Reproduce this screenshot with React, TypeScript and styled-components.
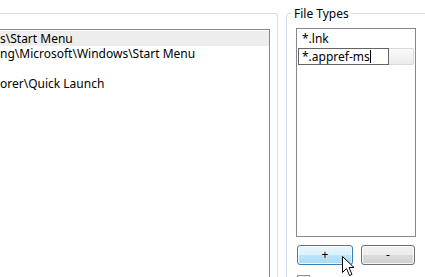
import React from "react";
import styled, { createGlobalStyle } from "styled-components";

const Global = createGlobalStyle`
  html, body { margin: 0; padding: 0; background: #ffffff; }
  body { font-family: "Segoe UI", "Noto Sans", "Open Sans", sans-serif; font-size: 12px; color: #000; }
`;

const Screen = styled.div`
  position: relative;
  width: 425px;
  height: 277px;
  overflow: hidden;
  display: flex;
  align-items: flex-start;
  background: #fff;
`;

const LeftGroup = styled.div`
  box-sizing: border-box;
  width: 278px;
  height: 300px;
  margin-top: 13px;
  border-top: 1px solid #d5dfe5;
  border-right: 1px solid #d5dfe5;
  border-top-right-radius: 3px;
  padding: 15px 7px 0 0;
  flex-shrink: 0;
`;

const PathList = styled.div`
  box-sizing: border-box;
  height: 300px;
  border-top: 1px solid #828790;
  border-right: 1px solid #828790;
  padding-top: 1px;
`;

const PathRow = styled.div<{ $selected?: boolean }>`
  height: 15px;
  line-height: 15px;
  white-space: nowrap;
  overflow: hidden;
  background: ${(p) => (p.$selected ? "#ededed" : "transparent")};
`;

const RightGroup = styled.fieldset`
  box-sizing: border-box;
  margin: 6px 0 0 8px;
  padding: 7px 8px 0 9px;
  width: 145px;
  height: 300px;
  border: 1px solid #d5dfe5;
  border-radius: 3px;
  flex-shrink: 0;
  min-width: 0;
`;

const Legend = styled.legend`
  padding: 0 2px;
  margin-left: -4px;
  line-height: 15px;
  color: #000;
`;

const TypeList = styled.div`
  box-sizing: border-box;
  width: 120px;
  height: 209px;
  border: 1px solid #828790;
  padding: 2px 1px 0 1px;
`;

const TypeRow = styled.div`
  position: relative;
  height: 16px;
  line-height: 16px;
  padding-left: 4px;
  white-space: nowrap;
`;

const EditRow = styled.div`
  position: relative;
  box-sizing: border-box;
  height: 17px;
  width: 116px;
  border: 1px solid #d9d9d9;
  border-radius: 2px;
  background: linear-gradient(#fafafa, #ebebeb);
  margin-top: 1px;
`;

const EditBox = styled.div`
  position: absolute;
  left: -1px;
  top: -1px;
  box-sizing: border-box;
  width: 91px;
  height: 17px;
  border: 1px solid #646464;
  background: #fff;
  line-height: 15px;
  padding-left: 3px;
  white-space: nowrap;
`;

const Caret = styled.span`
  display: inline-block;
  width: 1px;
  height: 13px;
  background: #000;
  vertical-align: -2px;
`;

const ButtonRow = styled.div`
  display: flex;
  gap: 8px;
  margin-top: 8px;
  padding-left: 1px;
`;

const Btn = styled.div<{ $hover?: boolean; $w: number }>`
  box-sizing: border-box;
  width: ${(p) => p.$w}px;
  height: 20px;
  border-radius: 3px;
  border: 1px solid ${(p) => (p.$hover ? "#3c7fb1" : "#707070")};
  box-shadow: inset 0 0 0 1px rgba(255, 255, 255, 0.8);
  background: ${(p) =>
    p.$hover
      ? "linear-gradient(#eaf6fd 0%, #d9f0fc 50%, #bee6fd 50%, #a7d9f5 100%)"
      : "linear-gradient(#f2f2f2 0%, #ebebeb 50%, #dddddd 50%, #cfcfcf 100%)"};
  display: flex;
  align-items: center;
  justify-content: center;
  line-height: 1;
  font-size: 12px;
  color: #000;
`;

const Check = styled.div`
  box-sizing: border-box;
  width: 13px;
  height: 13px;
  margin: 10px 0 0 1px;
  border: 1px solid #8e8f8f;
  background: linear-gradient(#f4f4f4, #fff);
`;

const Cursor = styled.svg`
  position: absolute;
  left: 342px;
  top: 256px;
`;

export default function App() {
  return (
    <>
      <Global />
      <Screen>
        <LeftGroup>
          <PathList>
            <PathRow $selected>s\Start Menu</PathRow>
            <PathRow>ng\Microsoft\Windows\Start Menu</PathRow>
            <PathRow />
            <PathRow>orer\Quick Launch</PathRow>
          </PathList>
        </LeftGroup>
        <RightGroup>
          <Legend>File Types</Legend>
          <TypeList>
            <TypeRow>*.lnk</TypeRow>
            <EditRow>
              <EditBox>
                *.appref-ms<Caret />
              </EditBox>
            </EditRow>
          </TypeList>
          <ButtonRow>
            <Btn $hover $w={56}>+</Btn>
            <Btn $w={54}>-</Btn>
          </ButtonRow>
          <Check />
        </RightGroup>
        <Cursor width="13" height="21" viewBox="0 0 13 21">
          <path
            d="M0.5 0.5 L0.5 16.5 L4.5 12.5 L7.5 19.5 L10 18.5 L7 11.5 L12 11.5 Z"
            fill="#fff"
            stroke="#000"
            strokeWidth="1"
            strokeLinejoin="miter"
          />
        </Cursor>
      </Screen>
    </>
  );
}
